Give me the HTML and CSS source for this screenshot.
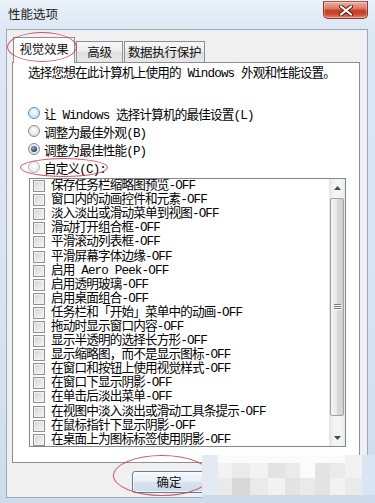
FILE: index.html
```html
<!DOCTYPE html>
<html lang="zh-CN">
<head>
<meta charset="utf-8">
<title>性能选项</title>
<link rel="stylesheet" href="styles.css">
</head>
<body>
<div class="window">
  <div class="titlebar">
    <span class="title">性能选项</span>
    <div class="close">
      <svg width="14" height="11" viewBox="0 0 14 11"><path d="M2 1.5 L12 9.5 M12 1.5 L2 9.5" stroke="#5a1a12" stroke-width="4" stroke-linecap="round"/><path d="M2 1.5 L12 9.5 M12 1.5 L2 9.5" stroke="#ffffff" stroke-width="2.2" stroke-linecap="round"/></svg>
    </div>
  </div>
  <div class="client">
    <div class="tabs">
      <div class="tab active">视觉效果</div>
      <div class="tab t2">高级</div>
      <div class="tab t3">数据执行保护</div>
    </div>
    <div class="panel">
      <p class="desc">选择您想在此计算机上使用的 Windows 外观和性能设置。</p>
      <div class="radios">
        <div class="radio"><span class="rb hover"></span>让 Windows 选择计算机的最佳设置(L)</div>
        <div class="radio"><span class="rb"></span>调整为最佳外观(B)</div>
        <div class="radio"><span class="rb checked"></span>调整为最佳性能(P)</div>
        <div class="radio faint"><span class="rb dim"></span>自定义(C):</div>
      </div>
      <div class="listbox">
        <ul class="items">
          <li><span class="cb"></span>保存任务栏缩略图预览-OFF</li>
          <li><span class="cb"></span>窗口内的动画控件和元素-OFF</li>
          <li><span class="cb"></span>淡入淡出或滑动菜单到视图-OFF</li>
          <li><span class="cb"></span>滑动打开组合框-OFF</li>
          <li><span class="cb"></span>平滑滚动列表框-OFF</li>
          <li><span class="cb"></span>平滑屏幕字体边缘-OFF</li>
          <li><span class="cb"></span>启用 Aero Peek-OFF</li>
          <li><span class="cb"></span>启用透明玻璃-OFF</li>
          <li><span class="cb"></span>启用桌面组合-OFF</li>
          <li><span class="cb"></span>任务栏和「开始」菜单中的动画-OFF</li>
          <li><span class="cb"></span>拖动时显示窗口内容-OFF</li>
          <li><span class="cb"></span>显示半透明的选择长方形-OFF</li>
          <li><span class="cb"></span>显示缩略图，而不是显示图标-OFF</li>
          <li><span class="cb"></span>在窗口和按钮上使用视觉样式-OFF</li>
          <li><span class="cb"></span>在窗口下显示阴影-OFF</li>
          <li><span class="cb"></span>在单击后淡出菜单-OFF</li>
          <li><span class="cb"></span>在视图中淡入淡出或滑动工具条提示-OFF</li>
          <li><span class="cb"></span>在鼠标指针下显示阴影-OFF</li>
          <li><span class="cb"></span>在桌面上为图标标签使用阴影-OFF</li>
        </ul>
        <div class="scrollbar">
          <div class="sb-btn up"><svg width="7" height="4" viewBox="0 0 7 4"><polygon points="3.5,0 7,4 0,4" fill="#4a4a4a"/></svg></div>
          <div class="sb-track">
            <div class="thumb">
              <svg width="7" height="6" viewBox="0 0 7 6"><path d="M0 0.5H7M0 2.5H7M0 4.5H7" stroke="#7c7c7c" stroke-width="1"/><path d="M0 1.5H7M0 3.5H7M0 5.5H7" stroke="#ffffff" stroke-width="1"/></svg>
            </div>
          </div>
          <div class="sb-btn down"><svg width="7" height="4" viewBox="0 0 7 4"><polygon points="0,0 7,0 3.5,4" fill="#4a4a4a"/></svg></div>
        </div>
      </div>
    </div>
    <div class="buttons">
      <button class="btn" type="button">确定</button>
    </div>
  </div>

  <div class="ellipse e1"></div>
  <div class="ellipse e2"></div>
  <div class="ellipse e3"></div>

  <div class="mosaic">
    <span class="bl"></span><span class="w"></span><span class="w"></span><span class="w"></span><span class="w"></span><span class="w"></span><span class="w"></span><span class="w"></span><span class="w"></span><span class="l1"></span><span class="fr"></span>
    <span class="bl"></span><span class="l1"></span><span class="l2"></span><span class="l1"></span><span class="l3"></span><span class="l2"></span><span class="w"></span><span class="l3"></span><span class="l2"></span><span class="l1"></span><span class="fr"></span>
    <span class="bl"></span><span class="l2"></span><span class="l4"></span><span class="l2"></span><span class="l1"></span><span class="l3"></span><span class="l2"></span><span class="l3"></span><span class="l1"></span><span class="l2"></span><span class="fr"></span>
    <span class="bt"></span><span class="bt"></span><span class="bt"></span><span class="bt"></span><span class="bt"></span><span class="bt"></span><span class="bt"></span><span class="bt"></span><span class="bt"></span><span class="bt"></span><span class="bt"></span>
  </div>
</div>
</body>
</html>
```
FILE: styles.css
```css
* { box-sizing: border-box; }
html, body { margin: 0; padding: 0; }
body {
  width: 375px;
  height: 503px;
  overflow: hidden;
  font-family: "Liberation Mono", "Noto Sans CJK SC", monospace;
  font-size: 12.6px;
  letter-spacing: -0.85px;
  color: #000;
  background: #d8e5f3;
}
.window {
  position: relative;
  width: 375px;
  height: 503px;
  display: flex;
  flex-direction: column;
  padding: 0 7px 5px 6px;
  background: linear-gradient(180deg, #eaf1f9 0px, #dde8f5 28px, #d7e4f2 60%, #cddced 100%);
}
.titlebar {
  height: 29px;
  flex: none;
  display: flex;
  justify-content: space-between;
  align-items: flex-start;
}
.title {
  font-family: "Noto Sans CJK SC", sans-serif;
  font-size: 12.5px;
  letter-spacing: 0;
  line-height: 16px;
  margin: 6px 0 0 2px;
  color: #1b1b1b;
}
.close {
  width: 45px;
  height: 18px;
  margin-top: 1px;
  border: 1px solid #86352a;
  border-top-color: #a45a50;
  border-radius: 0 0 5px 5px;
  background: linear-gradient(#eeb1a4 0%, #dc7a66 40%, #c43d25 55%, #c9472e 75%, #e08a70 100%);
  box-shadow: inset 0 0 0 1px rgba(255, 255, 255, 0.35);
  display: flex;
  align-items: center;
  justify-content: center;
}
.client {
  flex: 1;
  background: #f0f0f0;
  border: 1px solid #9aa9bd;
  padding: 7px 7px 0 5px;
  display: flex;
  flex-direction: column;
}
.tabs {
  display: flex;
  align-items: flex-end;
  height: 25px;
  padding-left: 1px;
  position: relative;
  z-index: 1;
  flex: none;
}
.tab {
  font-family: "Noto Sans CJK SC", sans-serif;
  font-size: 12.5px;
  letter-spacing: -0.3px;
  line-height: 16px;
  height: 21px;
  border: 1px solid #8c8e94;
  border-bottom: none;
  display: flex;
  align-items: center;
  justify-content: center;
  background: linear-gradient(#f7f7f7, #ececec 50%, #dfdfdf 52%, #e8e8e8);
  color: #111;
}
.tab.active {
  width: 62px;
  height: 26px;
  margin-bottom: -1px;
  background: #ffffff;
  padding-bottom: 3px;
}
.tab.t2 { width: 47px; margin-left: 1px; }
.tab.t3 { width: 81px; margin-left: 1px; }
.panel {
  flex: none;
  height: 401px;
  background: #ffffff;
  border: 1px solid #8c8e94;
  padding: 3px 0 0 15px;
}
.desc {
  margin: 0;
  line-height: 16px;
  white-space: nowrap;
}
.radios {
  margin-top: 22px;
  display: flex;
  flex-direction: column;
}
.radio {
  height: 18px;
  display: flex;
  align-items: center;
  gap: 4px;
  white-space: nowrap;
}
.rb {
  position: relative;
  width: 12px;
  height: 12px;
  flex: none;
  border-radius: 50%;
  border: 1px solid #8b8b8b;
  background: radial-gradient(circle at 50% 40%, #ffffff 0%, #e6e6e6 60%, #cfcfcf 100%);
}
.rb.hover {
  border-color: #5f92b8;
  background: radial-gradient(circle at 50% 40%, #ffffff 0%, #cfe8f8 55%, #a7d0ec 100%);
}
.rb.checked::after {
  content: "";
  position: absolute;
  left: 2px;
  top: 2px;
  width: 6px;
  height: 6px;
  border-radius: 50%;
  background: radial-gradient(circle at 40% 35%, #8fb2d2 0%, #2b4d70 60%, #16314d 100%);
}
.rb.dim {
  border-color: #b4b4b4;
  background: radial-gradient(circle at 50% 40%, #ffffff 0%, #eeeeee 60%, #dedede 100%);
}
.listbox {
  margin: 2px 0 0 1px;
  width: 317px;
  height: 269px;
  border: 1px solid #828790;
  display: flex;
  background: #ffffff;
}
.items {
  list-style: none;
  margin: 0;
  padding: 0;
  flex: 1;
  overflow: hidden;
}
.items li {
  height: 14.1px;
  line-height: 14px;
  display: flex;
  align-items: center;
  gap: 6px;
  padding-left: 3px;
  white-space: nowrap;
}
.cb {
  width: 12px;
  height: 12px;
  flex: none;
  border: 1px solid #909090;
  background: linear-gradient(135deg, #d3d3d3 0%, #e6e6e6 50%, #f4f4f4 100%);
  box-shadow: inset 0 0 0 1px #f2f2f2;
}
.scrollbar {
  width: 16px;
  flex: none;
  display: flex;
  flex-direction: column;
  background: linear-gradient(90deg, #e4e4e4, #f3f3f3 30%, #f5f5f5 70%, #e9e9e9);
}
.sb-btn {
  flex: none;
  display: flex;
  align-items: center;
  justify-content: center;
}
.sb-btn.up { height: 18px; }
.sb-btn.down { height: 17px; }
.sb-track {
  flex: 1;
  padding: 1px 0 13px;
}
.thumb {
  height: 218px;
  margin: 0 1px;
  border: 1px solid #a0a0a0;
  border-radius: 2px;
  background: linear-gradient(90deg, #f3f3f3 0%, #e9e9e9 50%, #d9d9d9 52%, #d2d2d2 100%);
  display: flex;
  align-items: center;
  justify-content: center;
}
.buttons {
  display: flex;
  margin-top: 8px;
  padding-left: 120px;
}
.btn {
  width: 74px;
  height: 22px;
  padding: 0;
  font-family: "Noto Sans CJK SC", sans-serif;
  font-size: 12.5px;
  line-height: 16px;
  color: #111;
  border: 1px solid #5e7d99;
  border-radius: 3px;
  background: linear-gradient(#f5f9fc 0%, #e6eef5 48%, #d6e3ef 52%, #cddcea 100%);
  box-shadow: inset 0 0 0 1px rgba(255, 255, 255, 0.7);
}
.ellipse {
  position: absolute;
  border: 1.2px solid rgba(200, 55, 75, 0.85);
  border-radius: 50%;
  z-index: 3;
}
.e1 { left: 7px; top: 32px; width: 70px; height: 30px; }
.e2 { left: 20px; top: 158px; width: 88px; height: 19px; }
.e3 { left: 113px; top: 455px; width: 98px; height: 41px; }
.mosaic {
  position: absolute;
  left: 202px;
  top: 455px;
  width: 173px;
  height: 48px;
  display: grid;
  grid-template-columns: 16px 14px 18px 18px 17px 15px 15px 15px 15px 17px 13px;
  grid-template-rows: 8px 15px 17px 8px;
  z-index: 4;
}
.mosaic .w { background: #fbfbfb; }
.mosaic .l1 { background: #f2f2f2; }
.mosaic .l2 { background: #eaeaea; }
.mosaic .l3 { background: #e3e3e3; }
.mosaic .l4 { background: #d8d8d8; }
.mosaic .bl { background: #e4eaf1; }
.mosaic .fr { background: #d9e5f2; }
.mosaic .bt { background: #cbdbec; }
```
